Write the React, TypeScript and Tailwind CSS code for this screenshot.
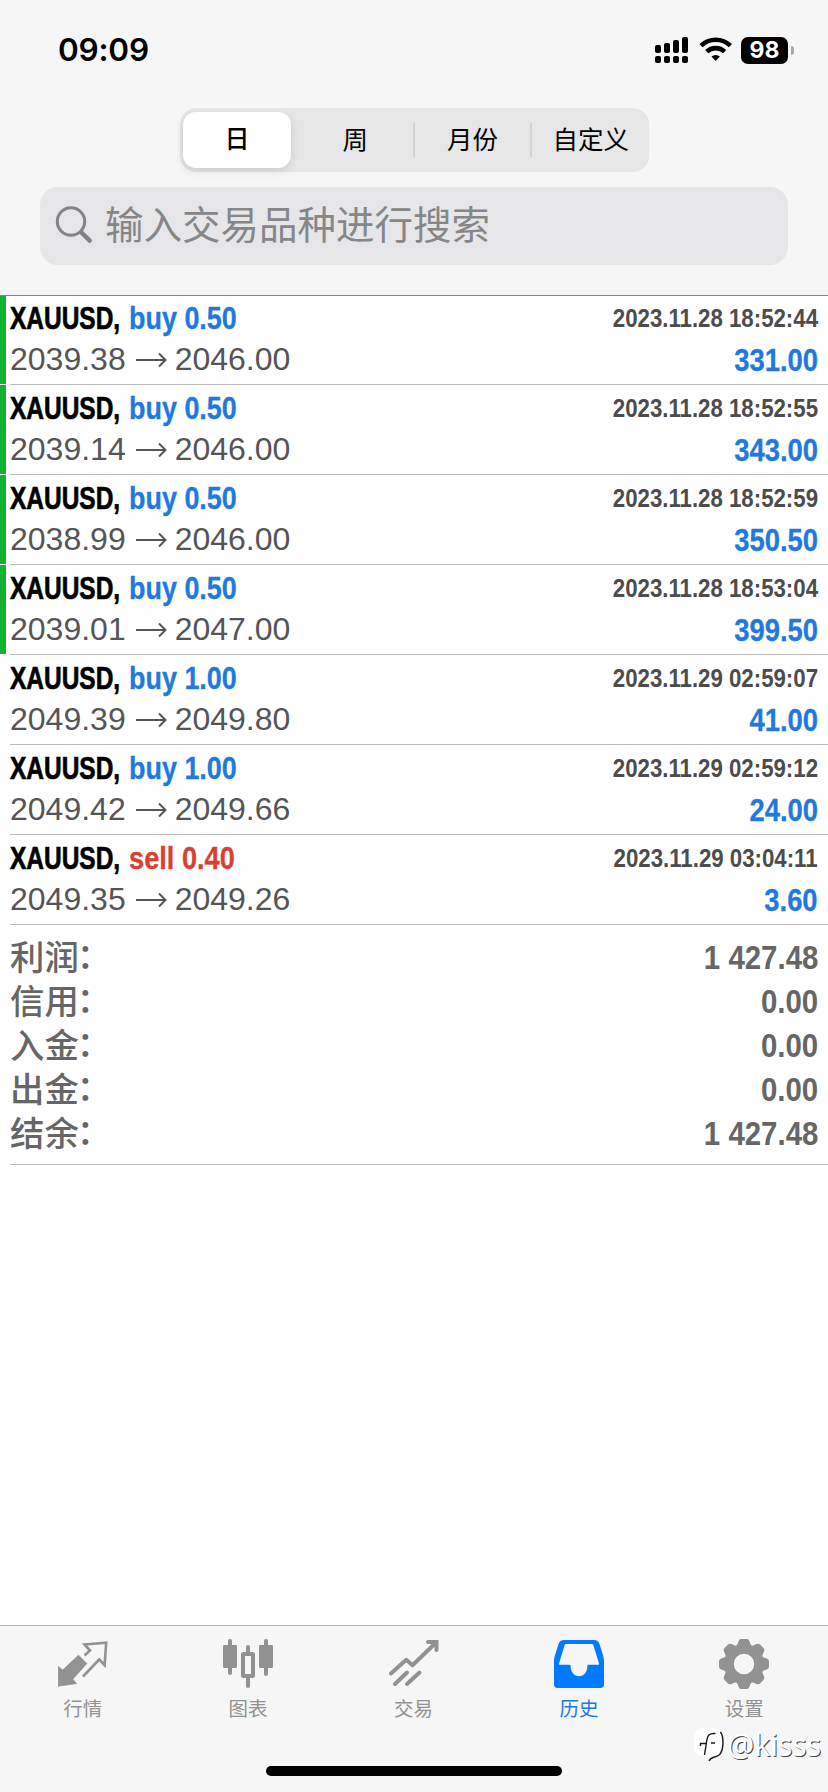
import React from 'react';

type Deal = {
  side: 'buy' | 'sell';
  volume: string;
  open: string;
  close: string;
  time: string;
  profit: string;
  marked?: boolean;
};

const deals: Deal[] = [
  { side: 'buy', volume: '0.50', open: '2039.38', close: '2046.00', time: '2023.11.28 18:52:44', profit: '331.00', marked: true },
  { side: 'buy', volume: '0.50', open: '2039.14', close: '2046.00', time: '2023.11.28 18:52:55', profit: '343.00', marked: true },
  { side: 'buy', volume: '0.50', open: '2038.99', close: '2046.00', time: '2023.11.28 18:52:59', profit: '350.50', marked: true },
  { side: 'buy', volume: '0.50', open: '2039.01', close: '2047.00', time: '2023.11.28 18:53:04', profit: '399.50', marked: true },
  { side: 'buy', volume: '1.00', open: '2049.39', close: '2049.80', time: '2023.11.29 02:59:07', profit: '41.00' },
  { side: 'buy', volume: '1.00', open: '2049.42', close: '2049.66', time: '2023.11.29 02:59:12', profit: '24.00' },
  { side: 'sell', volume: '0.40', open: '2049.35', close: '2049.26', time: '2023.11.29 03:04:11', profit: '3.60' },
];

const totals = [
  { label: '利润', value: '1 427.48' },
  { label: '信用', value: '0.00' },
  { label: '入金', value: '0.00' },
  { label: '出金', value: '0.00' },
  { label: '结余', value: '1 427.48' },
];

const periods = ['日', '周', '月份', '自定义'];

const QuotesIcon = () => (
  <svg viewBox="0 0 50 50" className="h-[50px] w-[50px]" fill="none">
    <path d="M20.5 16.2 28.8 24.5 14.8 40.2 18.5 44.5 0.3 47.2 0.3 27.5 4.8 31Z" fill="#929292" stroke="#929292" strokeWidth="0.8" strokeLinejoin="round" />
    <path d="M26.5 16.500 32 11.500 26.500 5.500 48.2 3.6 46.600 26.200 41.2 20.5 25 37.5" stroke="#929292" strokeWidth="2.6" />
  </svg>
);

const ChartIcon = () => (
  <svg viewBox="0 0 50 50" className="h-[50px] w-[50px]" fill="#929292">
    <rect x="5" y="0" width="4" height="36" rx="2" />
    <rect x="0" y="6" width="14" height="23" rx="1.2" />
    <rect x="41" y="0" width="4" height="37" rx="2" />
    <rect x="36" y="6" width="14" height="23" rx="1.2" />
    <rect x="23" y="6" width="4" height="10" rx="2" />
    <rect x="23" y="37" width="4" height="12" rx="2" />
    <rect x="20" y="15" width="10" height="22" rx="0.5" fill="none" stroke="#929292" strokeWidth="4" />
  </svg>
);

const TradeIcon = () => (
  <svg viewBox="0 0 50 50" className="h-[50px] w-[50px]" fill="none" stroke="#929292" strokeWidth="4" strokeLinecap="round" strokeLinejoin="round">
    <path d="M2 34.5 17.2 20.8 23.5 26.2 46.5 4" />
    <path d="M39 3H47.5V11" strokeLinejoin="miter" />
    <path d="M6 45 18 33.5M18 45 30.5 33.5" />
  </svg>
);

const HistoryIcon = () => (
  <svg viewBox="0 1 50 50" className="h-[50px] w-[50px]">
    <path
      fill="#007aff"
      fillRule="evenodd"
      d="M10 2h30c3 0 4.500 1.500 5.500 4l3.600 11.500c.6 2 .9 4 .9 6V46.500c0 2-1.300 3.500-3.500 3.500h-43C1.300 50 0 48.500 0 46.500V23.500c0-2 .3-4 .9-6L4.500 6C5.500 3.500 7 2 10 2ZM12.500 6C11.500 6 11 6.300 10.600 7.300L5 25.500C4.800 26.500 5 26.800 6 26.800H15.600c.7 0 1 .4 1 1.200 0 6 3.400 10.200 8.400 10.200s8.400-4.200 8.400-10.200c0-.8.3-1.200 1-1.200H44C45 26.800 45.200 26.500 45 25.500L39.400 7.300C39 6.300 38.500 6 37.500 6Z"
    />
  </svg>
);

const SettingsIcon = () => (
  <svg viewBox="-25 -25 50 50" className="h-[50px] w-[50px]" fill="none">
    <circle r="15" stroke="#929292" strokeWidth="9.500" />
    {[0, 45, 90, 135, 180, 225, 270, 315].map((angle) => (
      <path
        key={angle}
        transform={`rotate(${angle})`}
        fill="#929292"
        d="M-9-17C-7-18-6.500-20-5.500-22.500-4.800-24.400-4-25-2.500-25h5C4-25 4.800-24.400 5.500-22.500 6.500-20 7-18 9-17Z"
      />
    ))}
  </svg>
);

const tabs = [
  { label: '行情', icon: QuotesIcon },
  { label: '图表', icon: ChartIcon },
  { label: '交易', icon: TradeIcon },
  { label: '历史', icon: HistoryIcon, active: true },
  { label: '设置', icon: SettingsIcon },
];

const StatusBar = () => (
  <div className="flex h-[108px] items-start justify-between pl-[58px] pr-[34px] pt-9">
    <div className="font-['Inter'] text-[31.500px] leading-[28px] font-semibold tracking-[-0.200px] text-black">09:09</div>
    <div className="flex items-center">
      <svg viewBox="0 0 34 28" className="h-7 w-[34px]">
        <rect x="0" y="9" width="6" height="8" rx="2" />
        <rect x="9" y="7" width="6" height="10" rx="2" />
        <rect x="18" y="4" width="6" height="13" rx="2" />
        <rect x="27" y="1" width="6" height="16" rx="2" />
        <rect x="0" y="20" width="6" height="7" rx="2" />
        <rect x="9" y="20" width="6" height="7" rx="2" />
        <rect x="18" y="20" width="6" height="7" rx="2" />
        <rect x="27" y="20" width="6" height="7" rx="2" />
      </svg>
      <svg viewBox="0 0 34 28" className="ml-[10px] h-7 w-[34px]" fill="none" stroke="#000" strokeWidth="4.600">
        <path d="M2 9.700a21 21 0 0 1 29.400 0" />
        <path d="M7.700 15.700a13 13 0 0 1 18 0" />
        <path d="M12.500 20.600a6.200 6.200 0 0 1 8.400 0L16.700 25Z" fill="#000" stroke="none" />
      </svg>
      <div className="ml-2 flex h-[27px] w-[47px] items-center justify-center rounded-[7px] bg-black font-['Inter'] text-[23px] font-bold text-white">98</div>
      <div className="ml-[3px] h-[9px] w-[3px] rounded-r-full bg-[#a8a8a8]" />
    </div>
  </div>
);

const DealRow: React.FC<{ deal: Deal }> = ({ deal }) => (
  <div className="flex h-[90px] first:h-[89px]">
    <div className={deal.marked ? 'mb-px w-[6px] bg-[#13b233]' : 'w-[6px]'} />
    <div className="ml-1 flex flex-1 items-end justify-between border-b border-[#bcbcbe] pr-[10px]">
      <div className="pb-1 text-[32px] leading-[41px] whitespace-nowrap">
        <div className="flex font-bold">
          <span className="w-[118.500px] origin-left scale-x-[0.765] text-black [-webkit-text-stroke:0.7px_#000]">XAUUSD,</span>
          <span
            className={
              deal.side === 'buy'
                ? 'origin-left scale-x-[0.842] text-[#2179e0] [-webkit-text-stroke:0.3px_#2179e0]'
                : 'origin-left scale-x-[0.85] text-[#da3f32] [-webkit-text-stroke:0.3px_#da3f32]'
            }
          >
            {deal.side} {deal.volume}
          </span>
        </div>
        <div className="flex items-center text-[#555557]">
          {deal.open}
          <svg viewBox="0 0 31 16" className="mr-2 ml-[10px] h-4 w-[31px]" fill="none" stroke="#555557" strokeWidth="2">
            <path d="M0 8H29.500M23 1.500 29.500 8 23 14.500" />
          </svg>
          {deal.close}
        </div>
      </div>
      <div className="origin-right scale-x-[0.855] pb-[3px] text-right font-bold whitespace-nowrap">
        <div className="text-[26px] leading-[43px] text-[#4c4c4e]">{deal.time}</div>
        <div className="text-[32px] leading-[41px] text-[#2179e0] [-webkit-text-stroke:0.3px_#2179e0]">{deal.profit}</div>
      </div>
    </div>
  </div>
);

const App: React.FC = () => {
  return (
    <div className="relative flex h-[1792px] w-[828px] flex-col overflow-hidden bg-white font-['Liberation_Sans','Noto_Sans_CJK_SC',sans-serif]">
      <header className="h-[295px] shrink-0 bg-[#f6f6f6]">
        <StatusBar />

        <div className="ml-[180px] flex h-16 w-[469px] rounded-[16px] bg-[#e6e6e6] py-1">
          {periods.map((period, i) => (
            <div key={period} className="flex flex-1 items-center">
              <div
                className={
                  i === 0
                    ? 'ml-[3px] flex h-14 w-[108px] items-center justify-center rounded-[13px] bg-white text-[25px] font-medium text-black shadow-[0_3px_8px_rgba(0,0,0,0.12)]'
                    : 'flex flex-1 items-center justify-center pl-px text-[25.500px] text-black'
                }
              >
                {period}
              </div>
              {(i === 1 || i === 2) && <div className="h-[34px] w-[2px] bg-[#d2d2d4]" />}
            </div>
          ))}
        </div>

        <div className="mx-10 mt-[15px] flex h-[78px] items-center rounded-[18px] bg-[#e6e6e8] pl-[15px]">
          <svg viewBox="0 0 40 40" className="h-10 w-10" fill="none" stroke="#838386" strokeLinecap="round">
            <circle cx="16" cy="15.500" r="13.700" strokeWidth="3" />
            <path d="M26.500 26.500 34.700 34.700" strokeWidth="4.500" />
          </svg>
          <span className="ml-[10px] text-[38.500px] leading-[56px] text-[#868689]">输入交易品种进行搜索</span>
        </div>
      </header>

      <main className="flex-1 border-t border-[#858585]">
        {deals.map((deal) => (
          <DealRow key={deal.time} deal={deal} />
        ))}

        <div className="ml-[10px] h-60 border-b border-[#bcbcbe] pr-[10px] pt-[10px] text-[#666667]">
          {totals.map((total) => (
            <div key={total.label} className="flex h-11 items-center justify-between">
              <div className="flex pt-px text-[34.400px] leading-[44px] font-medium">
                {total.label}
                <span className="-mt-[2px] -ml-[2px]">：</span>
              </div>
              <span className="origin-right scale-x-[0.865] text-[34px] leading-[44px] font-bold">{total.value}</span>
            </div>
          ))}
        </div>
      </main>

      <footer className="flex h-[167px] shrink-0 flex-col items-center border-t border-[#b2b2b2] bg-[#f6f6f6]">
        <nav className="flex w-full pt-[13px] pr-px">
          {tabs.map((tab) => (
            <div key={tab.label} className="flex flex-1 flex-col items-center">
              <tab.icon />
              <span className={tab.active ? 'mt-[6px] text-[19.500px] leading-7 text-[#2179e0]' : 'mt-[6px] text-[19.500px] leading-7 text-[#929292]'}>
                {tab.label}
              </span>
            </div>
          ))}
        </nav>
        <div className="mt-auto mb-4 h-[10px] w-[296px] rounded-full bg-black" />
      </footer>

      {/* author watermark */}
      <div className="absolute right-[7px] bottom-[29px] flex items-center">
        <svg viewBox="0 0 31 35" className="h-[35px] w-[31px]" fill="none">
          <path d="M10 0H20C26 0 29 4 29 11V18C29 25 26 28 20 29L15 33 13 28H9C3 28 0 24 0 18V10C0 4 3 0 10 0Z" fill="#fff" />
          <path d="M26.500 4C30 9 30 23 25 27 21 30 17 28 15 33" stroke="#1a1a1a" strokeWidth="1.400" />
          <path d="M21.500 5.500C15 5 13.500 7 12.500 14L10.500 27M6.500 18V15.500H12.500M17 15H21" stroke="#1a1a1a" strokeWidth="1.400" />
        </svg>
        <span className="ml-[2px] font-['Noto_Sans'] text-[30px] leading-9 text-white [text-shadow:1px_1px_0_#444]">@kisss</span>
      </div>
    </div>
  );
};

export default App;
